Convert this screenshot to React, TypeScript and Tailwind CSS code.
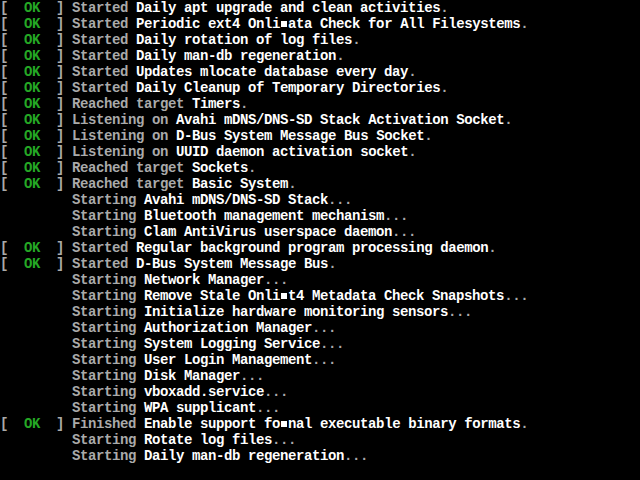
import React from "react";

type Line = {
  ok?: boolean;
  verb: string;
  // parts of the highlighted text, "#" marks a garbled cell
  text: string;
  tail: string;
};

const lines: Line[] = [
  { ok: true, verb: "Started", text: "Daily apt upgrade and clean activities", tail: "." },
  { ok: true, verb: "Started", text: "Periodic ext4 Onli#ata Check for All Filesystems", tail: "." },
  { ok: true, verb: "Started", text: "Daily rotation of log files", tail: "." },
  { ok: true, verb: "Started", text: "Daily man-db regeneration", tail: "." },
  { ok: true, verb: "Started", text: "Updates mlocate database every day", tail: "." },
  { ok: true, verb: "Started", text: "Daily Cleanup of Temporary Directories", tail: "." },
  { ok: true, verb: "Reached target", text: "Timers", tail: "." },
  { ok: true, verb: "Listening on", text: "Avahi mDNS/DNS-SD Stack Activation Socket", tail: "." },
  { ok: true, verb: "Listening on", text: "D-Bus System Message Bus Socket", tail: "." },
  { ok: true, verb: "Listening on", text: "UUID daemon activation socket", tail: "." },
  { ok: true, verb: "Reached target", text: "Sockets", tail: "." },
  { ok: true, verb: "Reached target", text: "Basic System", tail: "." },
  { verb: "Starting", text: "Avahi mDNS/DNS-SD Stack", tail: "..." },
  { verb: "Starting", text: "Bluetooth management mechanism", tail: "..." },
  { verb: "Starting", text: "Clam AntiVirus userspace daemon", tail: "..." },
  { ok: true, verb: "Started", text: "Regular background program processing daemon", tail: "." },
  { ok: true, verb: "Started", text: "D-Bus System Message Bus", tail: "." },
  { verb: "Starting", text: "Network Manager", tail: "..." },
  { verb: "Starting", text: "Remove Stale Onli#t4 Metadata Check Snapshots", tail: "..." },
  { verb: "Starting", text: "Initialize hardware monitoring sensors", tail: "..." },
  { verb: "Starting", text: "Authorization Manager", tail: "..." },
  { verb: "Starting", text: "System Logging Service", tail: "..." },
  { verb: "Starting", text: "User Login Management", tail: "..." },
  { verb: "Starting", text: "Disk Manager", tail: "..." },
  { verb: "Starting", text: "vboxadd.service", tail: "..." },
  { verb: "Starting", text: "WPA supplicant", tail: "..." },
  { ok: true, verb: "Finished", text: "Enable support fo#nal executable binary formats", tail: "." },
  { verb: "Starting", text: "Rotate log files", tail: "..." },
  { verb: "Starting", text: "Daily man-db regeneration", tail: "..." },
];

const Blot = () => (
  <span className="inline-flex w-[8px] h-[16px] align-top items-center justify-center">
    <span className="block w-[6px] h-[6px] bg-white" />
  </span>
);

const Highlight = ({ text }: { text: string }) => {
  const parts = text.split("#");
  return (
    <span className="text-white">
      {parts.map((p, i) => (
        <React.Fragment key={i}>
          {i > 0 && <Blot />}
          {p}
        </React.Fragment>
      ))}
    </span>
  );
};

export default function App() {
  return (
    <div
      className="w-[640px] h-[480px] bg-black overflow-hidden text-[14px] tracking-[-0.4px] font-bold text-[#aaaaaa]"
      style={{ fontFamily: '"Liberation Mono", "DejaVu Sans Mono", monospace' }}
    >
      {lines.map((l, i) => (
        <div key={i} className="h-[16px] leading-[16px] whitespace-pre">
          {l.ok ? (
            <span>
              {"[  "}
              <span className="text-[#25a825]">OK</span>
              {"  ] "}
            </span>
          ) : (
            <span>{"         "}</span>
          )}
          <span>{l.verb} </span>
          <Highlight text={l.text} />
          <span>{l.tail}</span>
        </div>
      ))}
    </div>
  );
}
